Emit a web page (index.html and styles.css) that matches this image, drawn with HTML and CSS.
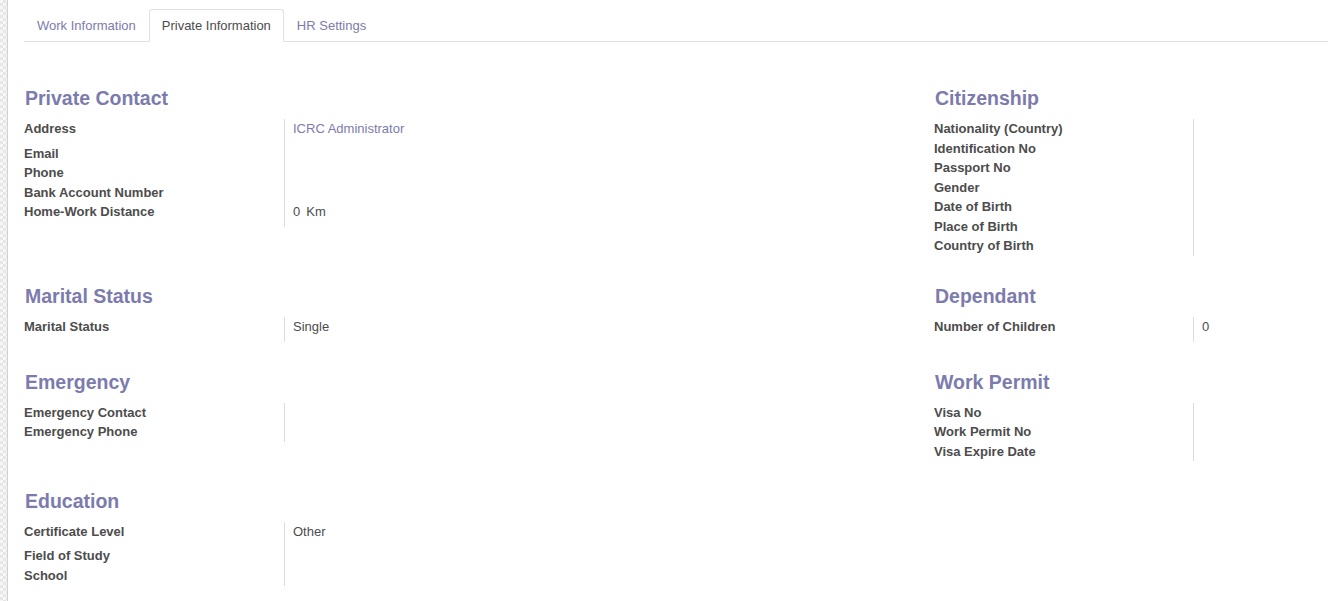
FILE: index.html
```html
<!DOCTYPE html>
<html>
<head>
<meta charset="utf-8">
<link rel="stylesheet" href="styles.css">
</head>
<body>
<div class="page">
  <div class="strip"></div>
  <main class="content">
    <nav class="tabs">
      <a class="tab">Work Information</a>
      <a class="tab active">Private Information</a>
      <a class="tab">HR Settings</a>
    </nav>
    <div class="sections">
      <section class="section">
        <h2 class="heading">Private Contact</h2>
        <div class="group">
          <div class="label">Address</div><div class="value pb5"><a class="link">ICRC Administrator</a></div>
          <div class="label">Email</div><div class="value"></div>
          <div class="label">Phone</div><div class="value"></div>
          <div class="label">Bank Account Number</div><div class="value"></div>
          <div class="label">Home-Work Distance</div><div class="value pb55"><span>0</span><span class="unit">Km</span></div>
        </div>
      </section>
      <section class="section">
        <h2 class="heading">Citizenship</h2>
        <div class="group narrow">
          <div class="label">Nationality (Country)</div><div class="value"></div>
          <div class="label">Identification No</div><div class="value"></div>
          <div class="label">Passport No</div><div class="value"></div>
          <div class="label">Gender</div><div class="value"></div>
          <div class="label">Date of Birth</div><div class="value"></div>
          <div class="label">Place of Birth</div><div class="value"></div>
          <div class="label">Country of Birth</div><div class="value"></div>
        </div>
      </section>
      <section class="section">
        <h2 class="heading">Marital Status</h2>
        <div class="group">
          <div class="label">Marital Status</div><div class="value pb55">Single</div>
        </div>
      </section>
      <section class="section">
        <h2 class="heading">Dependant</h2>
        <div class="group narrow">
          <div class="label">Number of Children</div><div class="value pb55">0</div>
        </div>
      </section>
      <section class="section">
        <h2 class="heading">Emergency</h2>
        <div class="group">
          <div class="label">Emergency Contact</div><div class="value"></div>
          <div class="label">Emergency Phone</div><div class="value"></div>
        </div>
      </section>
      <section class="section">
        <h2 class="heading">Work Permit</h2>
        <div class="group narrow">
          <div class="label">Visa No</div><div class="value"></div>
          <div class="label">Work Permit No</div><div class="value"></div>
          <div class="label">Visa Expire Date</div><div class="value"></div>
        </div>
      </section>
      <section class="section">
        <h2 class="heading">Education</h2>
        <div class="group shifted">
          <div class="label">Certificate Level</div><div class="value pb45">Other</div>
          <div class="label">Field of Study</div><div class="value"></div>
          <div class="label">School</div><div class="value pb05"></div>
        </div>
      </section>
    </div>
  </main>
</div>
</body>
</html>
```

FILE: styles.css
```css
html, body {
  margin: 0;
  padding: 0;
  background: #ffffff;
}

body {
  font-family: "Liberation Sans", Arial, sans-serif;
  font-size: 13px;
  color: #4c4c4c;
}

.page {
  display: flex;
  min-height: 601px;
}

.strip {
  width: 7px;
  flex: none;
  border-right: 1px solid #d2d2d2;
  background-color: #f4f4f4;
  background-image: repeating-conic-gradient(#e6e6e6 0 25%, #f7f7f7 0 50%);
  background-size: 6px 6px;
}

.content {
  flex: 1;
  padding-left: 16px;
}

.tabs {
  display: flex;
  margin-top: 9px;
  border-bottom: 1px solid #dee2e6;
}

.tab {
  display: block;
  padding: 6.5px 12px;
  line-height: 18px;
  border: 1px solid transparent;
  border-radius: 3px 3px 0 0;
  margin-bottom: -1px;
  color: #7c7bad;
  cursor: pointer;
}

.tab.active {
  color: #4c4c4c;
  background: #ffffff;
  border-color: #dee2e6 #dee2e6 #ffffff;
}

.sections {
  display: grid;
  grid-template-columns: 910px 1fr;
  row-gap: 28px;
  margin-top: 44px;
  align-items: start;
}

.heading {
  margin: 0 0 9px 1px;
  font-size: 19.5px;
  line-height: 24px;
  font-weight: bold;
  color: #7c7bad;
}

.group {
  display: grid;
  grid-template-columns: 260px 1fr;
  line-height: 19.5px;
}

.group.narrow {
  grid-template-columns: 259px 1fr;
}

.group.shifted {
  margin-top: 1px;
}

.label {
  font-weight: bold;
  color: #4c4c4c;
  align-self: start;
}

.value {
  border-left: 1px solid #dcdcdc;
  padding-left: 8px;
  min-height: 19.5px;
}

.pb5 { padding-bottom: 5px; }
.pb55 { padding-bottom: 5.5px; }
.pb45 { padding-bottom: 4.5px; }
.pb05 { padding-bottom: 0.5px; }

.link {
  color: #7c7bad;
  text-decoration: none;
}

.unit {
  margin-left: 6px;
}
```
